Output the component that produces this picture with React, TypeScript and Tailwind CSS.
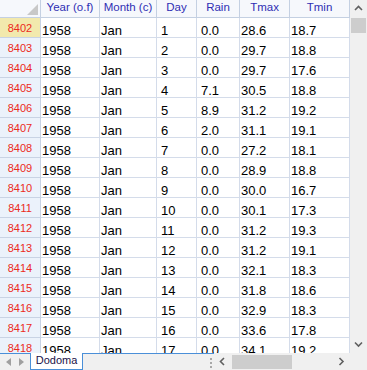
import React from "react";

const rows: [number, number, string, number, string, string, string][] = [
  [8402, 1958, "Jan", 1, "0.0", "28.6", "18.7"],
  [8403, 1958, "Jan", 2, "0.0", "29.7", "18.8"],
  [8404, 1958, "Jan", 3, "0.0", "29.7", "17.6"],
  [8405, 1958, "Jan", 4, "7.1", "30.5", "18.8"],
  [8406, 1958, "Jan", 5, "8.9", "31.2", "19.2"],
  [8407, 1958, "Jan", 6, "2.0", "31.1", "19.1"],
  [8408, 1958, "Jan", 7, "0.0", "27.2", "18.1"],
  [8409, 1958, "Jan", 8, "0.0", "28.9", "18.8"],
  [8410, 1958, "Jan", 9, "0.0", "30.0", "16.7"],
  [8411, 1958, "Jan", 10, "0.0", "30.1", "17.3"],
  [8412, 1958, "Jan", 11, "0.0", "31.2", "19.3"],
  [8413, 1958, "Jan", 12, "0.0", "31.2", "19.1"],
  [8414, 1958, "Jan", 13, "0.0", "32.1", "18.3"],
  [8415, 1958, "Jan", 14, "0.0", "31.8", "18.6"],
  [8416, 1958, "Jan", 15, "0.0", "32.9", "18.3"],
  [8417, 1958, "Jan", 16, "0.0", "33.6", "17.8"],
  [8418, 1958, "Jan", 17, "0.0", "34.1", "19.2"],
];

const headers = ["Year (o.f)", "Month (c)", "Day", "Rain", "Tmax", "Tmin"];
const pads = ["pl-[1px]", "pl-[1px]", "pl-[4px]", "pl-[4px]", "pl-[1px]", "pl-[1px]"];

function Chevron({ dir }: { dir: "up" | "down" | "left" | "right" }) {
  const d =
    dir === "up"
      ? "M1 5 L4.5 1.5 L8 5"
      : dir === "down"
      ? "M1 1.5 L4.5 5 L8 1.5"
      : dir === "left"
      ? "M5 1 L1.5 4.5 L5 8"
      : "M1.5 1 L5 4.5 L1.5 8";
  const w = dir === "up" || dir === "down" ? 9 : 7;
  const h = dir === "up" || dir === "down" ? 7 : 9;
  return (
    <svg width={w} height={h} viewBox={`0 0 ${w} ${h}`}>
      <path d={d} fill="none" stroke="#606060" strokeWidth="1.6" />
    </svg>
  );
}

export default function App() {
  return (
    <div className="w-[367px] h-[370px] flex flex-col bg-white overflow-hidden font-['Liberation_Sans',Arial,sans-serif]">
      <div className="flex h-[353px]">
        <div className="w-[350px] h-[353px] overflow-hidden">
          <div className="grid grid-cols-[41px_59px_57px_40px_43px_50px_60px]">
            {/* header */}
            <div className="relative h-[18px] bg-[#f6f8fc] border-r border-b border-[#c4d0e2]">
              <svg className="absolute right-[2px] bottom-[2px]" width="11" height="11" viewBox="0 0 11 11">
                <path d="M11 0 L11 11 L0 11 Z" fill="#c8c8c8" />
              </svg>
            </div>
            {headers.map((h) => (
              <div
                key={h}
                className="h-[18px] bg-[#f6f8fc] border-r border-b border-[#c4d0e2] flex items-center justify-center pb-[1px] text-[11.5px] text-[#2f2fb4] whitespace-nowrap"
              >
                {h}
              </div>
            ))}
            {rows.map((r, i) => (
              <React.Fragment key={r[0]}>
                <div
                  className={
                    "h-[20px] border-r border-b border-[#c8d3e4] flex items-center justify-center pt-[1px] text-[11px] text-[#ec2a1c] " +
                    (i === 0 ? "bg-[#f2e9ad]" : "bg-[#ebf2fb]")
                  }
                >
                  {r[0]}
                </div>
                {r.slice(1).map((v, j) => (
                  <div
                    key={j}
                    className={
                      "h-[20px] border-r border-b border-[#d4dcea] flex items-center pt-[6px] text-[13px] text-black whitespace-nowrap " +
                      pads[j]
                    }
                  >
                    {v}
                  </div>
                ))}
              </React.Fragment>
            ))}
          </div>
        </div>
        {/* vertical scrollbar */}
        <div className="w-[17px] h-[353px] bg-[#f0f0f0] flex flex-col">
          <div className="h-[17px] flex items-center justify-center">
            <Chevron dir="up" />
          </div>
          <div className="flex-1 flex flex-col items-center">
            <div className="mt-[1px] w-[15px] h-[15px] bg-[#cdcdcd]" />
          </div>
          <div className="h-[17px] flex items-center justify-center">
            <Chevron dir="down" />
          </div>
        </div>
      </div>
      {/* bottom bar */}
      <div className="flex h-[17px] bg-[#f0f0f0]">
        <div className="w-[30px] border-t border-[#4a8fd8] flex items-center pl-[6px] gap-[8px]">
          <svg width="5" height="8" viewBox="0 0 5 8">
            <path d="M5 0 L0 4 L5 8 Z" fill="#a0a0a0" />
          </svg>
          <svg width="5" height="8" viewBox="0 0 5 8">
            <path d="M0 0 L5 4 L0 8 Z" fill="#a0a0a0" />
          </svg>
        </div>
        <div className="w-[53px] h-[17px] bg-white border-x border-b border-[#4a8fd8] flex items-center justify-center pb-[1px] text-[11px] text-[#201048]">
          Dodoma
        </div>
        <div className="w-[131px] border-t border-[#4a8fd8] flex items-center justify-end pr-[2px]">
          <div className="flex flex-col gap-[2px] pt-[1px]">
            <div className="w-[2px] h-[2px] bg-[#a8a8a8]" />
            <div className="w-[2px] h-[2px] bg-[#a8a8a8]" />
            <div className="w-[2px] h-[2px] bg-[#a8a8a8]" />
          </div>
        </div>
        <div className="w-[136px] flex items-center">
          <div className="w-[17px] h-[17px] flex items-center justify-center">
            <Chevron dir="left" />
          </div>
          <div className="flex-1 h-[17px] flex items-center">
            <div className="ml-[1px] w-[60px] h-[14px] bg-[#cdcdcd]" />
          </div>
          <div className="w-[17px] h-[17px] flex items-center justify-center">
            <Chevron dir="right" />
          </div>
        </div>
        <div className="w-[17px]" />
      </div>
    </div>
  );
}
